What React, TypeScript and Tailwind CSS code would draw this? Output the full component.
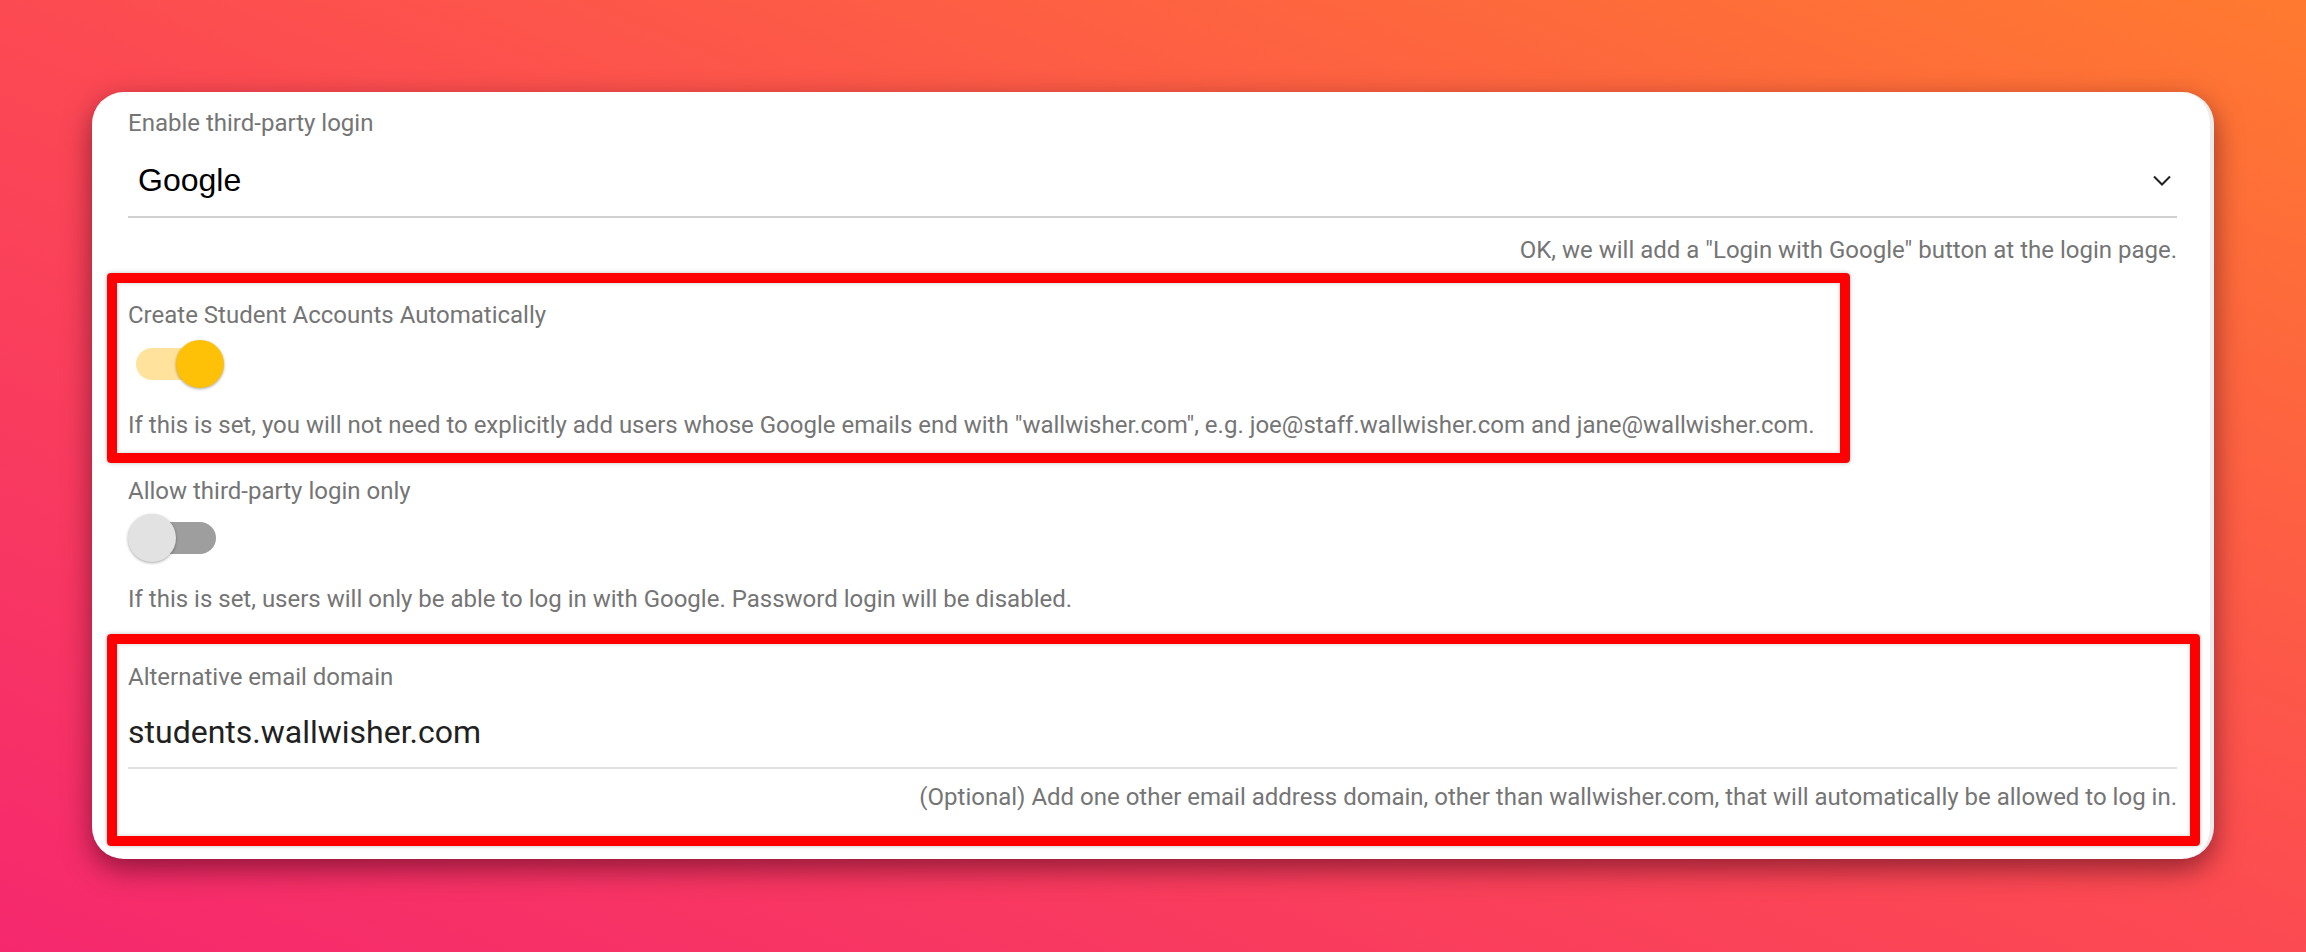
import { useState } from 'react'

function Toggle({ on, onChange }: { on: boolean; onChange: () => void }) {
  return (
    <button onClick={onChange} className="relative w-[96px] h-[48px] flex items-center" aria-pressed={on}>
      <span className={`mx-[8px] h-[32px] w-[80px] rounded-full ${on ? 'bg-[#ffe29c]' : 'bg-[#9e9e9e]'}`} />
      <span
        className={`absolute top-0 h-[48px] w-[48px] rounded-full shadow-[0_1px_3px_rgba(0,0,0,0.35)] ${
          on ? 'left-[48px] bg-[#ffc107]' : 'left-0 bg-[#e2e2e2]'
        }`}
      />
    </button>
  )
}

function RedBox({ className }: { className: string }) {
  return (
    <div
      className={`pointer-events-none absolute rounded-[4px] border-[10px] border-[#ff0000] shadow-[0_0_4px_rgba(0,0,0,0.25),inset_0_0_4px_rgba(0,0,0,0.2)] ${className}`}
    />
  )
}

export default function App() {
  const [autoCreate, setAutoCreate] = useState(true)
  const [thirdPartyOnly, setThirdPartyOnly] = useState(false)
  const [domain, setDomain] = useState('students.wallwisher.com')

  return (
    <div className="min-h-screen p-[92px] bg-[linear-gradient(to_top_right,#f5286e_0%,#fc4a52_50%,#ff7a30_100%)] font-['Roboto',sans-serif]">
      <div className="w-full h-[767px] rounded-[32px] bg-white border-r-[4px] border-[#ececec] shadow-[0_10px_28px_rgba(60,0,20,0.55)] pt-[17px] pb-[48px] pl-[36px] pr-[33px] flex flex-col text-[24px] leading-[28px] text-[#757575]">
        {/* login provider */}
        <div>Enable third-party login</div>
        <div className="mt-[25px] flex items-center justify-between pl-[10px] pr-[6px] pb-[18px] border-b-2 border-[#d0d0d0]">
          <span className="font-['Liberation_Sans',Arial,sans-serif] text-[32px] leading-[36px] text-black">Google</span>
          <svg width="18" height="11" viewBox="0 0 18 11" fill="none">
            <path d="M1 1.5 L9 9.5 L17 1.5" stroke="#212121" strokeWidth="2" />
          </svg>
        </div>
        <div className="mt-[18px] text-right">OK, we will add a "Login with Google" button at the login page.</div>

        {/* auto create */}
        <div className="relative mt-[37px]">
          <RedBox className="-top-[28px] -left-[21px] w-[1743px] -bottom-[24px]" />
          <div>Create Student Accounts Automatically</div>
          <div className="mt-[11px]">
            <Toggle on={autoCreate} onChange={() => setAutoCreate(!autoCreate)} />
          </div>
          <div className="mt-[23px]">
            If this is set, you will not need to explicitly add users whose Google emails end with "wallwisher.com", e.g. joe@staff.wallwisher.com and jane@wallwisher.com.
          </div>
        </div>

        {/* third party only */}
        <div className="mt-[38px]">
          <div>Allow third-party login only</div>
          <div className="mt-[9px]">
            <Toggle on={thirdPartyOnly} onChange={() => setThirdPartyOnly(!thirdPartyOnly)} />
          </div>
          <div className="mt-[23px]">If this is set, users will only be able to log in with Google. Password login will be disabled.</div>
        </div>

        {/* alternative domain */}
        <div className="relative mt-[50px]">
          <RedBox className="-top-[29px] -left-[21px] -right-[23px] -bottom-[35px]" />
          <div>Alternative email domain</div>
          <input
            value={domain}
            onChange={(e) => setDomain(e.target.value)}
            className="mt-[23px] w-full block pb-[17px] border-b-2 border-[#e0e0e0] outline-none text-[32px] leading-[36px] h-[55px] text-[#212121] bg-transparent"
          />
          <div className="mt-[14px] text-right">
            (Optional) Add one other email address domain, other than wallwisher.com, that will automatically be allowed to log in.
          </div>
        </div>
      </div>
    </div>
  )
}
